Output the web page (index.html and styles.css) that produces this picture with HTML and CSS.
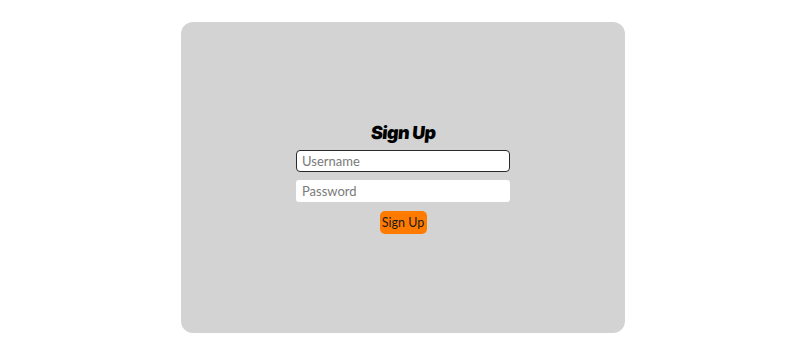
FILE: index.html
```html
<!DOCTYPE html>
<html lang="en">
<head>
<meta charset="utf-8">
<title>Sign Up</title>
<link rel="stylesheet" href="styles.css">
</head>
<body>
<div class="card">
  <form class="form">
    <h1 class="title">Sign Up</h1>
    <input class="field field--active" type="text" placeholder="Username">
    <input class="field" type="password" placeholder="Password">
    <button class="btn" type="button">Sign Up</button>
  </form>
</div>
</body>
</html>
```

FILE: styles.css
```css
html, body {
  margin: 0;
  padding: 0;
  background: #ffffff;
}
body {
  font-family: "Lato", "DejaVu Sans", sans-serif;
  padding-top: 22px;
}
.card {
  width: 444px;
  height: 311px;
  margin: 0 auto;
  background: #d3d3d3;
  border-radius: 12px;
  display: flex;
  align-items: center;
  justify-content: center;
}
.form {
  display: flex;
  flex-direction: column;
  align-items: center;
  width: 214px;
}
.title {
  margin: 0 0 6px;
  font-family: "Inter", "DejaVu Sans", sans-serif;
  font-weight: 900;
  font-size: 18px;
  line-height: 23px;
  color: #000;
  letter-spacing: -0.6px;
  transform: skewX(-5deg);
}
.field {
  box-sizing: border-box;
  width: 214px;
  height: 22px;
  margin: 0 0 8px;
  padding: 0 5px;
  border: 1px solid transparent;
  border-radius: 3px;
  background: #fff;
  font-family: "Lato", "DejaVu Sans", sans-serif;
  font-size: 13px;
  color: #222;
  outline: none;
}
.field::placeholder {
  color: #7a7a7a;
}
.field--active {
  border: 1.5px solid #2a2a2a;
  border-radius: 4px;
}
.btn {
  margin-top: 1px;
  width: 47px;
  height: 23px;
  padding: 0;
  border: none;
  border-radius: 5px;
  background: #ff7b00;
  color: #1a1a1a;
  font-family: "Lato", "DejaVu Sans", sans-serif;
  font-size: 12.5px;
}
```
